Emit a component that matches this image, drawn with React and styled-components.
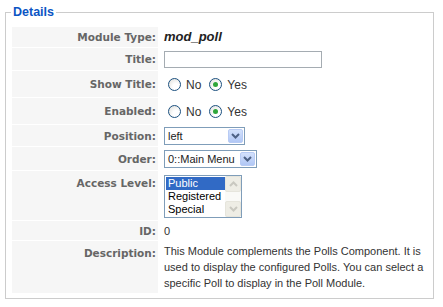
import React from 'react';
import styled, { createGlobalStyle } from 'styled-components';

const GlobalStyle = createGlobalStyle`
	html, body {
		margin: 0;
		padding: 0;
		background: #fff;
	}
	body {
		font-family: 'Liberation Sans', Arial, sans-serif;
		font-size: 11px;
		color: #333;
	}
`;

const Page = styled.div`
	padding: 5px 0 0 5px;
	width: 429px;
`;

const Fieldset = styled.fieldset`
	margin: 0;
	padding: 7px 6px 5px 6px;
	border: 1px solid #cccccc;
	min-height: 280px;
	box-sizing: border-box;
`;

const Legend = styled.legend`
	padding: 0 2px;
	margin-left: -1px;
	color: #0b55c4;
	font-weight: bold;
	font-size: 12.5px;
	line-height: 15px;
`;

const Grid = styled.div`
	display: grid;
	grid-template-columns: 146px 1fr;
	column-gap: 1px;
	row-gap: 1px;
`;

const Key = styled.div`
	background: #f6f6f6;
	color: #666666;
	font-family: 'DejaVu Sans', Verdana, sans-serif;
	font-weight: bold;
	font-size: 10.5px;
	text-align: right;
	padding: ${(p) => (p.$top ? '6px' : '0')} 2px 0 0;
	height: ${(p) => p.$h}px;
	box-sizing: border-box;
	display: flex;
	justify-content: flex-end;
	align-items: ${(p) => (p.$top ? 'flex-start' : 'center')};
`;

const Value = styled.div`
	padding: ${(p) => p.$pt || 0}px 0 0 5px;
	height: ${(p) => p.$h}px;
	box-sizing: border-box;
	display: flex;
	align-items: ${(p) => (p.$top ? 'flex-start' : 'center')};
	color: #333;
	line-height: 16px;
`;

const TypeName = styled.span`
	font-weight: bold;
	font-style: italic;
	font-size: 13px;
	color: #222;
`;

const TextInput = styled.div`
	width: 158px;
	height: 17px;
	border: 1px solid #a5acb2;
	box-sizing: border-box;
	background: #fff;
`;

const RadioGroup = styled.div`
	display: flex;
	align-items: center;
	padding-left: 4px;
`;

const RadioCircle = styled.span`
	width: 13px;
	height: 13px;
	border-radius: 50%;
	border: 1px solid #1c5180;
	box-sizing: border-box;
	background: radial-gradient(circle at 65% 70%, #ffffff 30%, #dcdcd7 100%);
	display: inline-flex;
	align-items: center;
	justify-content: center;
	margin-right: 5px;
	&::after {
		content: '';
		width: 5px;
		height: 5px;
		border-radius: 50%;
		background: ${(p) => (p.$on ? '#2fa63a' : 'transparent')};
	}
`;

const RadioLabel = styled.span`
	font-size: 12px;
	color: #333;
	margin-right: 8px;
	margin-top: 2px;
`;

const Select = styled.div`
	width: ${(p) => p.$w}px;
	height: 18px;
	border: 1px solid #7f9db9;
	box-sizing: border-box;
	background: #fff;
	display: flex;
	align-items: center;
	justify-content: space-between;
	padding: 1px;
`;

const SelectText = styled.span`
	padding-left: 2px;
	font-size: 11px;
	color: #222;
`;

const DropButton = styled.span`
	width: 15px;
	height: 14px;
	border: 1px solid #b8cbf4;
	box-sizing: border-box;
	border-radius: 2px;
	background: linear-gradient(#d3e1fc, #b1c7f5);
	display: flex;
	align-items: center;
	justify-content: center;
`;

const ListBox = styled.div`
	width: 78px;
	height: 43px;
	border: 1px solid #7f9db9;
	box-sizing: border-box;
	display: flex;
	background: #fff;
`;

const Options = styled.div`
	flex: 1;
	padding: 1px 0 0 1px;
`;

const Option = styled.div`
	height: 13px;
	line-height: 13px;
	font-size: 11px;
	padding-left: 2px;
	color: ${(p) => (p.$sel ? '#fff' : '#000')};
	background: ${(p) => (p.$sel ? '#316ac5' : 'transparent')};
`;

const ScrollBar = styled.div`
	width: 16px;
	display: flex;
	flex-direction: column;
	justify-content: space-between;
	background: #fafaf7;
`;

const ScrollButton = styled.span`
	height: 16px;
	background: #eeede5;
	border: 1px solid #e6e5dc;
	border-radius: 2px;
	box-sizing: border-box;
	display: flex;
	align-items: center;
	justify-content: center;
`;

const Chevron = ({ color = '#4d6185', up = false }) => (
	<svg width="9" height="6" viewBox="0 0 9 6">
		<path
			d={up ? 'M1 5 L4.5 1.5 L8 5' : 'M1 1 L4.5 4.5 L8 1'}
			fill="none"
			stroke={color}
			strokeWidth="2"
		/>
	</svg>
);

const Radio = ({ on, children }) => (
	<>
		<RadioCircle $on={on} />
		<RadioLabel>{children}</RadioLabel>
	</>
);

const App = () => (
	<>
		<GlobalStyle />
		<Page>
			<Fieldset>
				<Legend>Details</Legend>
				<Grid>
					<Key $h={20}>Module Type:</Key>
					<Value $h={20}>
						<TypeName>mod_poll</TypeName>
					</Value>

					<Key $h={22}>Title:</Key>
					<Value $h={22}>
						<TextInput />
					</Value>

					<Key $h={26}>Show Title:</Key>
					<Value $h={26}>
						<RadioGroup>
							<Radio>No</Radio>
							<Radio on>Yes</Radio>
						</RadioGroup>
					</Value>

					<Key $h={26}>Enabled:</Key>
					<Value $h={26}>
						<RadioGroup>
							<Radio>No</Radio>
							<Radio on>Yes</Radio>
						</RadioGroup>
					</Value>

					<Key $h={21}>Position:</Key>
					<Value $h={21}>
						<Select $w={81}>
							<SelectText>left</SelectText>
							<DropButton>
								<Chevron />
							</DropButton>
						</Select>
					</Value>

					<Key $h={23}>Order:</Key>
					<Value $h={23}>
						<Select $w={93}>
							<SelectText>0::Main Menu</SelectText>
							<DropButton>
								<Chevron />
							</DropButton>
						</Select>
					</Value>

					<Key $h={49} $top>Access Level:</Key>
					<Value $h={49} $top $pt={4}>
						<ListBox>
							<Options>
								<Option $sel>Public</Option>
								<Option>Registered</Option>
								<Option>Special</Option>
							</Options>
							<ScrollBar>
								<ScrollButton>
									<Chevron color="#c9c8c0" up />
								</ScrollButton>
								<ScrollButton>
									<Chevron color="#c9c8c0" />
								</ScrollButton>
							</ScrollBar>
						</ListBox>
					</Value>

					<Key $h={19}>ID:</Key>
					<Value $h={19}>0</Value>

					<Key $h={52} $top>Description:</Key>
					<Value $h={52} $top $pt={2}>
						This Module complements the Polls Component. It is used to display the
						configured Polls. You can select a specific Poll to display in the Poll
						Module.
					</Value>
				</Grid>
			</Fieldset>
		</Page>
	</>
);

export default App;
